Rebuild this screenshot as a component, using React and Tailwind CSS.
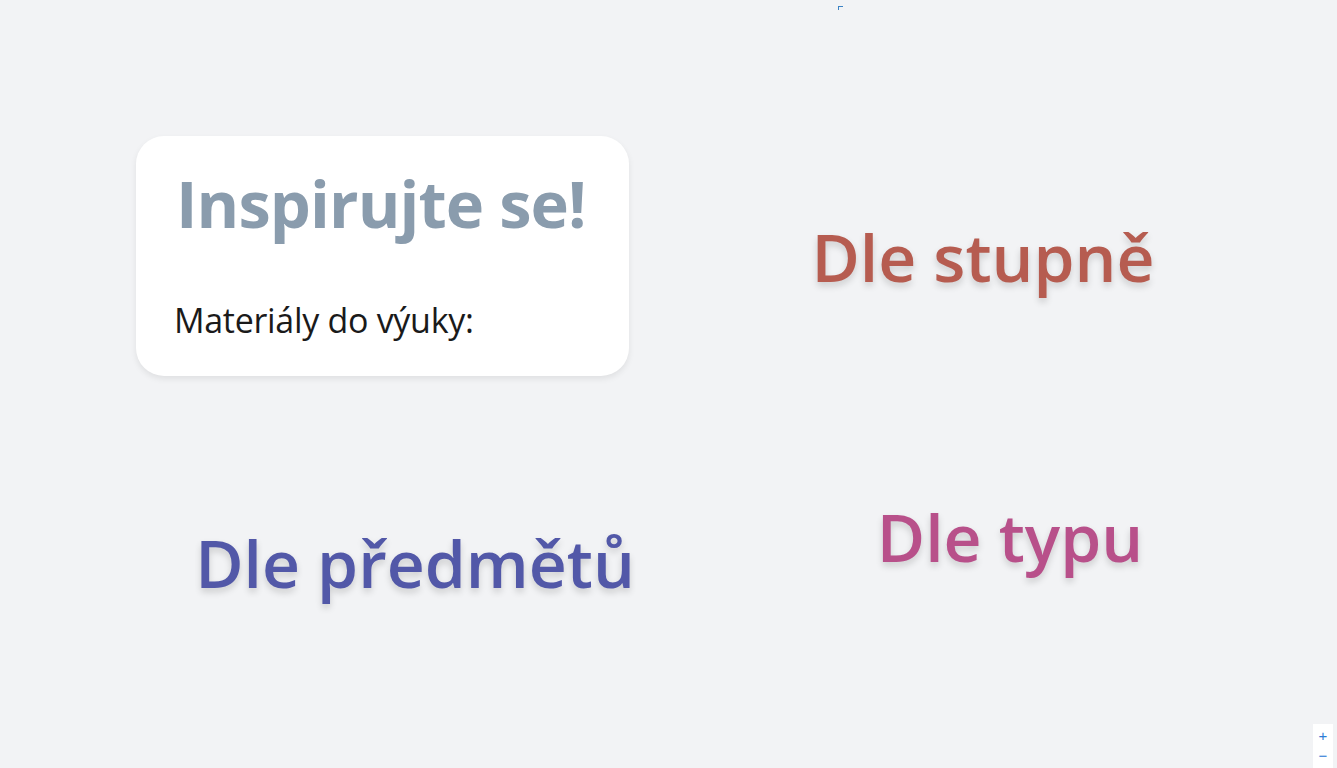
export default function App() {
  const font = { fontFamily: '"Open Sans", "Noto Sans", sans-serif' };
  return (
    <div className="relative min-h-screen w-full overflow-hidden bg-[#f2f3f5] pt-[136px]" style={font}>
      <div className="absolute left-[838px] top-[6px] h-[4px] w-[5px] border-l border-t border-[#3b82c4]" />
      <div className="flex h-[240px]">
        <div className="ml-[136px] flex h-[240px] w-[493px] flex-col rounded-[28px] bg-white px-[40px] pt-[22px] shadow-[0_3px_6px_rgba(0,0,0,0.08)]">
          <h1 className="whitespace-nowrap text-[65px] font-bold leading-[90px] tracking-[-0.9px] text-[#8a9cad]">Inspirujte se!</h1>
          <p className="mt-[50px] -ml-[2px] whitespace-nowrap text-[34px] leading-[44px] tracking-[-0.3px] text-[#1a1a1a]">Materiály do výuky:</p>
        </div>
        <div className="flex flex-1 items-center justify-center pt-[0px]">
          <span className="whitespace-nowrap text-[66px] font-semibold text-[#b65c50] [text-shadow:0_4px_7px_rgba(0,0,0,0.16)]">Dle stupně</span>
        </div>
      </div>
      <div className="flex h-[250px] items-start">
        <div className="flex w-[830px] justify-center pt-[137px]">
          <span className="whitespace-nowrap text-[66px] font-semibold text-[#5258a8] [text-shadow:0_4px_7px_rgba(0,0,0,0.16)]">Dle předmětů</span>
        </div>
        <div className="flex w-[360px] justify-center pt-[111px]">
          <span className="whitespace-nowrap text-[66px] font-semibold text-[#b8508a] [text-shadow:0_4px_7px_rgba(0,0,0,0.16)]">Dle typu</span>
        </div>
      </div>
      <div className="absolute bottom-0 right-[4px] flex h-[44px] w-[20px] flex-col items-center justify-center bg-white text-[15px] leading-[20px] text-[#2b7bd6]" style={{ fontFamily: '"Liberation Sans", sans-serif' }}>
        <span>+</span>
        <span>−</span>
      </div>
    </div>
  );
}
